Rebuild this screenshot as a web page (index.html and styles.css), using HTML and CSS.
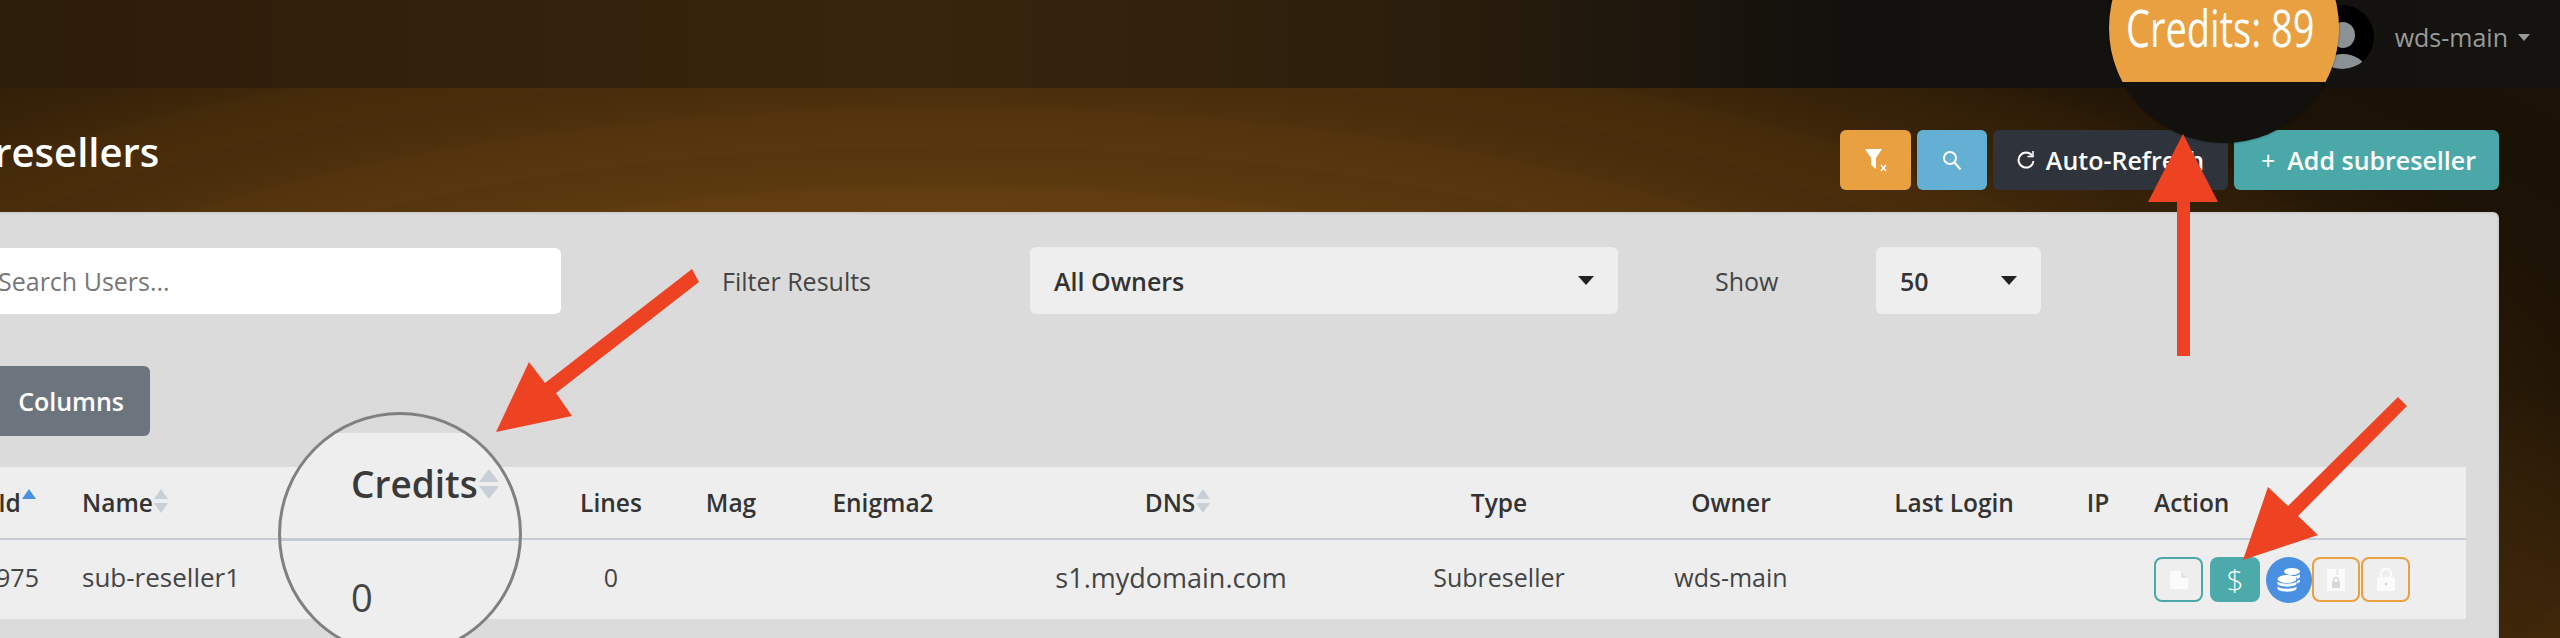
FILE: index.html
```html
<!DOCTYPE html>
<html lang="en">
<head>
    <meta charset="UTF-8">
    <title>Subresellers</title>
    <link rel="stylesheet" href="styles.css">
</head>
<body>
    <div class="topbar">
        <div class="avatar">
            <svg width="64" height="64" viewBox="0 0 64 64"><ellipse cx="33" cy="30" rx="12" ry="13" fill="#8a9296"/><ellipse cx="33" cy="64" rx="22" ry="15" fill="#8a9296"/></svg>
        </div>
        <span class="username">wds-main</span>
        <span class="user-caret"></span>
    </div>

    <div class="page-head">
        <h1 class="title">Subresellers</h1>
        <div class="head-btns">
            <button class="btn btn-icon btn-orange">
                <svg width="24" height="24" viewBox="0 0 24 24"><path d="M1 1h17l-6 9v11l-5-4v-7z" fill="#fff"/><path d="M17 17l5 6M22 17l-5 6" stroke="#fff" stroke-width="1.6"/></svg>
            </button>
            <button class="btn btn-icon btn-blue">
                <svg width="20" height="20" viewBox="0 0 20 20" fill="none" stroke="#fff" stroke-width="2"><circle cx="8" cy="8" r="6"/><path d="M12.5 12.5l6 7"/></svg>
            </button>
            <button class="btn btn-dark">
                <svg width="18" height="20" viewBox="0 0 18 20" fill="none" stroke="#fff" stroke-width="2"><path d="M15 5.500a7.500 7.500 0 1 0 1.500 5.500"/><path d="M16 1v5.500h-5.500" stroke-width="1.500"/></svg>
                Auto-Refresh
            </button>
            <button class="btn btn-teal"><span class="plus">+</span>Add subreseller</button>
        </div>
    </div>

    <div class="panel">
        <div class="filters">
            <input class="search" type="text" placeholder="Search Users...">
            <span class="filter-label">Filter Results</span>
            <div class="select select-owner">All Owners<span class="select-caret"></span></div>
            <span class="show-label">Show</span>
            <div class="select select-show">50<span class="select-caret"></span></div>
        </div>

        <button class="btn-columns">Columns</button>

        <table class="users">
            <colgroup>
                <col class="c-id"><col class="c-name"><col class="c-credits"><col class="c-lines"><col class="c-mag"><col class="c-enigma"><col class="c-dns"><col class="c-type"><col class="c-owner"><col class="c-login"><col class="c-ip"><col class="c-action">
            </colgroup>
            <thead>
                <tr>
                    <th>Id<span class="sort sort-asc"></span></th>
                    <th class="left">Name<span class="sort"></span></th>
                    <th></th>
                    <th>Lines</th>
                    <th>Mag</th>
                    <th>Enigma2</th>
                    <th>DNS<span class="sort"></span></th>
                    <th>Type</th>
                    <th>Owner</th>
                    <th>Last Login</th>
                    <th>IP</th>
                    <th class="left action-head">Action</th>
                </tr>
            </thead>
            <tbody>
                <tr>
                    <td>975</td>
                    <td class="left user-name">sub-reseller1</td>
                    <td></td>
                    <td>0</td>
                    <td></td>
                    <td></td>
                    <td class="dns">s1.mydomain.com</td>
                    <td>Subreseller</td>
                    <td>wds-main</td>
                    <td></td>
                    <td></td>
                    <td class="left action-cell">
                        <div class="actions">
                            <span class="act act-teal-line">
                                <svg width="20" height="20" viewBox="0 0 20 20"><path d="M1 1h11l7 7v10a1 1 0 0 1-1 1H1z" fill="#fbfbfb"/><path d="M12 1l7 7h-7z" fill="#e4e4e4"/></svg>
                            </span>
                            <span class="act act-teal">$</span>
                            <span class="act act-coins">
                                <svg width="24" height="24" viewBox="0 0 24 24" fill="#fff"><ellipse cx="15" cy="3.500" rx="8" ry="3.500"/><path d="M20 8.500l3-1.500v2.500l-3 1.500zM20 13l3-1.500V14l-3 1.500z"/><path d="M9 7.500c4 1.200 10 1 14-1v1c-1 1.500-4 2.500-7 2.300-2-.9-5-1.600-7-2.300z"/><ellipse cx="10" cy="11" rx="9.500" ry="4"/><path d="M.5 13.500c3 3 16 3 19 0v2.500c-2 3.500-17 3.500-19 0zM.5 18.500c3 3 16 3 19 0V21c-2 3.500-17 3.500-19 0z"/></svg>
                            </span>
                            <span class="act act-orange-line">
                                <svg width="18" height="22" viewBox="0 0 18 22"><path d="M1 0h8v6h3V0h5a1 1 0 0 1 1 1v20a1 1 0 0 1-1 1H1a1 1 0 0 1-1-1V1a1 1 0 0 1 1-1z" fill="#fbfbfb"/><rect x="5" y="13" width="8" height="6" fill="#d8d8d8"/><path d="M6.500 13v-2a2.500 2.500 0 0 1 5 0v2" fill="none" stroke="#d8d8d8" stroke-width="1.500"/></svg>
                            </span>
                            <span class="act act-orange-line act-last">
                                <svg width="18" height="23" viewBox="0 0 18 23"><path d="M4 10V6a5 5 0 0 1 10 0v4" fill="none" stroke="#fbfbfb" stroke-width="2.500"/><rect y="9" width="18" height="14" rx="1.500" fill="#fbfbfb"/><circle cx="9" cy="16" r="1.500" fill="#d8d8d8"/></svg>
                            </span>
                        </div>
                    </td>
                </tr>
            </tbody>
        </table>
    </div>

    <!-- annotations drawn over the screenshot -->
    <div class="callout"><span class="callout-text">Credits: 89</span></div>

    <div class="magnifier">
        <span class="mag-head">Credits<span class="sort sort-big"></span></span>
        <span class="mag-val">0</span>
    </div>

    <svg class="arrows" width="2560" height="638" viewBox="0 0 2560 638" fill="#ee4323">
        <polygon points="2183,134 2218,202 2190,202 2190,356 2177,356 2177,202 2148,202"/>
        <polygon points="496,432 529,362 545,383 692,269 699,282 556,393 572,416"/>
        <polygon points="2243,560 2268,487 2288,506 2398,397 2407,406 2298,516 2318,535"/>
    </svg>
</body>
</html>
```

FILE: styles.css
```css
html, body {
    margin: 0;
    height: 638px;
    overflow: hidden;
}
body {
    position: relative;
    font-family: "Open Sans", "Liberation Sans", sans-serif;
    font-size: 25px;
    color: #444;
    background:
        repeating-radial-gradient(ellipse 1700px 560px at 950px 460px, rgba(0,0,0,0) 0 7%, rgba(0,0,0,0.04) 7% 14%),
        radial-gradient(ellipse 900px 420px at 2700px 800px, #5a370e 0%, rgba(90,55,14,0) 100%),
        radial-gradient(ellipse 1700px 560px at 950px 460px, #804d16 0%, #6a4212 40%, #452b0a 75%, #1c1205 100%);
}

.topbar {
    display: flex;
    justify-content: flex-end;
    align-items: center;
    box-sizing: border-box;
    height: 88px;
    padding: 0 30px 14px 0;
    background: linear-gradient(90deg, #2c1c0a, #38250d 35%, #2c1e0c 55%, #12110d 72%, #14130f 100%);
}
.avatar {
    width: 64px;
    height: 64px;
    margin-right: 21px;
    border-radius: 50%;
    background: #000;
    overflow: hidden;
}
.avatar svg {
    display: block;
}
.username {
    color: #9a9a9a;
}
.user-caret {
    margin-left: 10px;
    border-top: 7px solid #9a9a9a;
    border-left: 6px solid transparent;
    border-right: 6px solid transparent;
}

.page-head {
    display: flex;
    justify-content: space-between;
    align-items: center;
    height: 60px;
    margin: 42px 61px 22px -80px;
}
.title {
    margin: 0 0 18px 2px;
    font-size: 40px;
    font-weight: 600;
    color: #fff;
}
.head-btns {
    display: flex;
    gap: 6px;
}
.btn {
    display: flex;
    align-items: center;
    justify-content: center;
    height: 60px;
    border: none;
    border-radius: 6px;
    color: #fff;
    font-family: inherit;
    font-size: 25px;
    font-weight: 600;
}
.btn-icon {
    width: 70px;
    padding: 0;
}
.btn-orange {
    width: 71px;
    background-color: #e9a040;
}
.btn-blue { background-color: #64b0d4; }
.btn-dark {
    width: 235px;
    gap: 11px;
    background-color: #2f343c;
}
.btn-teal {
    width: 265px;
    padding-left: 10px;
    background-color: #4aa8a9;
}
.plus {
    margin-right: 12px;
    font-weight: 400;
}

.panel {
    box-sizing: border-box;
    height: 500px;
    margin: 0 61px 0 -80px;
    padding: 33px 31px 0 31px;
    border: 2px solid #cfcfcf;
    border-radius: 6px;
    background-color: #dbdbdb;
}
.filters {
    display: flex;
    align-items: center;
    height: 67px;
}
.search {
    box-sizing: border-box;
    width: 584px;
    height: 66px;
    margin-left: 24px;
    padding: 0 21px;
    border: none;
    border-radius: 6px;
    background-color: #fff;
    font-family: inherit;
    font-size: 25px;
}
.search::placeholder {
    color: #777;
    opacity: 1;
}
.filter-label {
    width: 308px;
    margin-left: 161px;
}
.select {
    display: flex;
    align-items: center;
    justify-content: space-between;
    box-sizing: border-box;
    height: 67px;
    padding: 0 24px;
    border-radius: 6px;
    background-color: #eee;
    color: #333;
    font-weight: 600;
}
.select-owner { width: 588px; }
.select-show { width: 165px; }
.select-caret {
    border-top: 9px solid #222;
    border-left: 8px solid transparent;
    border-right: 8px solid transparent;
}
.show-label {
    width: 161px;
    margin-left: 97px;
}

.btn-columns {
    display: block;
    width: 197px;
    height: 70px;
    margin-top: 52px;
    padding: 0 26px;
    border: none;
    border-radius: 6px;
    background-color: #6c757d;
    color: #fff;
    font-family: inherit;
    font-size: 25px;
    font-weight: 600;
    text-align: right;
}

.users {
    width: 2513px;
    margin-top: 31px;
    border-collapse: collapse;
    table-layout: fixed;
    background-color: #eee;
}
.c-id { width: 129px; }
.c-name { width: 248px; }
.c-credits { width: 231px; }
.c-lines { width: 100px; }
.c-mag { width: 140px; }
.c-enigma { width: 164px; }
.c-dns { width: 426px; }
.c-type { width: 216px; }
.c-owner { width: 248px; }
.c-login { width: 198px; }
.c-ip { width: 90px; }
.c-action { width: 323px; }
th, td {
    padding: 0;
    text-align: center;
    white-space: nowrap;
}
th {
    height: 71px;
    border-bottom: 2px solid #c4cad4;
    color: #333;
    font-size: 24.500px;
    font-weight: 600;
}
td {
    height: 74px;
    padding-bottom: 5px;
}
td.user-name {
    font-size: 26px;
}
td.dns {
    padding-right: 14px;
    font-size: 27px;
}
th.left, td.left {
    text-align: left;
}
.action-head, .action-cell {
    padding-left: 11px;
}
.action-cell {
    padding-bottom: 0;
}
.sort {
    display: inline-block;
    position: relative;
    width: 15px;
    height: 24px;
    margin-left: 1px;
    vertical-align: -1px;
}
.sort::before, .sort::after {
    content: "";
    position: absolute;
    left: 0;
    border-left: 7.500px solid transparent;
    border-right: 7.500px solid transparent;
}
.sort::before {
    top: 0;
    border-bottom: 10px solid #c8cfd6;
}
.sort::after {
    bottom: 0;
    border-top: 10px solid #c8cfd6;
}
.sort-asc::before {
    border-bottom-color: #4a90e2;
}
.sort-asc::after {
    display: none;
}
.actions {
    display: flex;
    align-items: center;
}
.act {
    display: flex;
    align-items: center;
    justify-content: center;
    box-sizing: border-box;
    width: 49px;
    height: 45px;
    border-radius: 8px;
}
.act-teal-line {
    border: 2px solid #4aa8a9;
}
.act-teal {
    width: 50px;
    margin-left: 7px;
    background-color: #4caaaa;
    color: #fff;
    font-size: 30px;
    font-weight: 300;
}
.act-coins {
    width: 46px;
    height: 46px;
    margin-left: 6px;
    border-radius: 50%;
    background-color: #4a90e2;
}
.act-orange-line {
    width: 48px;
    border: 2px solid #e9a040;
}
.act-last {
    width: 49px;
    margin-left: 1px;
}

.callout {
    position: absolute;
    left: 2109px;
    top: -87px;
    width: 230px;
    height: 230px;
    border-radius: 50%;
    background: linear-gradient(#e9a040 169px, #12110d 169px);
    box-shadow: 0 0 2px rgba(0,0,0,0.6);
}
.callout-text {
    position: absolute;
    left: 17px;
    top: 92px;
    color: #fff;
    font-size: 52px;
    font-weight: 500;
    line-height: 44px;
    white-space: nowrap;
    transform: scaleX(0.73);
    transform-origin: left center;
}

.magnifier {
    position: absolute;
    left: 278px;
    top: 412px;
    box-sizing: border-box;
    width: 244px;
    height: 244px;
    border: 3px solid #808080;
    border-radius: 50%;
    background: linear-gradient(#dbdbdb 18px, #eee 18px 123px, #c4cad4 123px 126px, #eee 126px);
}
.mag-head {
    position: absolute;
    left: 70px;
    top: 43px;
    color: #3a3a3a;
    font-size: 37px;
    font-weight: 600;
    white-space: nowrap;
}
.sort-big {
    width: 20px;
    height: 30px;
}
.sort-big::before {
    border-left-width: 10px;
    border-right-width: 10px;
    border-bottom-width: 13px;
}
.sort-big::after {
    border-left-width: 10px;
    border-right-width: 10px;
    border-top-width: 13px;
}
.mag-val {
    position: absolute;
    left: 70px;
    top: 156px;
    color: #444;
    font-size: 38px;
}

.arrows {
    position: absolute;
    left: 0;
    top: 0;
}
```
